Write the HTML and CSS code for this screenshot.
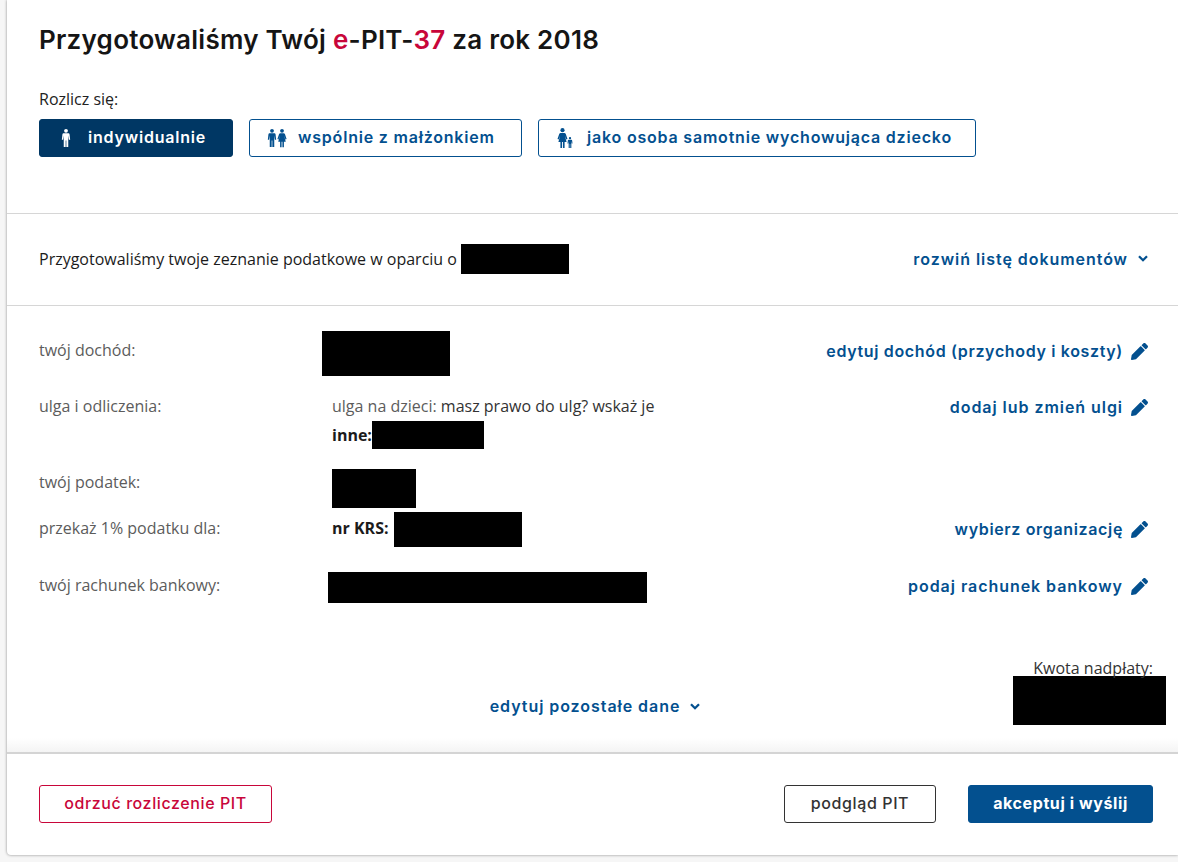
FILE: index.html
```html
<!DOCTYPE html>
<html lang="pl">
<head>
<meta charset="utf-8">
<title>e-PIT</title>
<link rel="stylesheet" href="styles.css">
</head>
<body>
<svg class="defs" width="0" height="0" aria-hidden="true">
  <symbol id="pencil" viewBox="0 0 512 512"><path d="M497.9 142.1l-46.1 46.1c-4.7 4.7-12.3 4.7-17 0l-111-111c-4.7-4.7-4.7-12.3 0-17l46.1-46.1c18.7-18.7 49.1-18.7 67.9 0l60.1 60.1c18.8 18.7 18.8 49.1 0 67.9zM284.2 99.8L21.6 362.4.4 483.9c-2.9 16.4 11.4 30.6 27.8 27.8l121.5-21.3 262.6-262.6c4.7-4.7 4.7-12.3 0-17l-111-111c-4.8-4.7-12.4-4.7-17.1 0z"/></symbol>
  <symbol id="man" viewBox="0 0 12 22"><circle cx="6" cy="2.4" r="2.3"/><path d="M3.4 5.4h5.2c1 0 1.6.6 1.7 1.5l.7 6.2h-1.500l-.8-5.200v14H6.400v-8h-.8v8H3.300v-14l-.8 5.200H1l.7-6.200c.1-.9.7-1.500 1.700-1.500z"/></symbol>
  <symbol id="woman" viewBox="0 0 12 22"><circle cx="6" cy="2.4" r="2.3"/><path d="M4 5.400h4c.8 0 1.300.4 1.600 1.100l1.900 5.700-1.300.5L8.600 8.400l1.900 7.100H8.300V22H6.500v-6.500h-1V22H3.700v-6.500H1.500l1.900-7.100-1.600 4.300-1.300-.5 1.900-5.700C2.700 5.800 3.200 5.400 4 5.400z"/></symbol>
  <symbol id="chev" viewBox="0 0 10 7"><path d="M1 1.200l4 4 4-4" fill="none" stroke="currentColor" stroke-width="2.300"/></symbol>
</svg>
<main class="card">
  <section class="head">
    <h1 class="title">Przygotowaliśmy Twój <span class="red">e</span>-PIT-<span class="red">37</span> za rok 2018</h1>
    <p class="settle">Rozlicz się:</p>
    <div class="modes">
      <button class="mode active"><svg class="ico-one"><use href="#man"/></svg>indywidualnie</button>
      <button class="mode"><span class="ico-pair"><svg><use href="#man"/></svg><svg><use href="#woman"/></svg></span>wspólnie z małżonkiem</button>
      <button class="mode"><span class="ico-kid"><svg class="big"><use href="#woman"/></svg><svg class="small"><use href="#man"/></svg></span>jako osoba samotnie wychowująca dziecko</button>
    </div>
  </section>

  <section class="docs">
    <div class="docs-text">Przygotowaliśmy twoje zeznanie podatkowe w oparciu o <span class="redact r-docs"></span></div>
    <a class="link wide">rozwiń listę dokumentów<svg class="chev"><use href="#chev"/></svg></a>
  </section>

  <section class="data">
    <div class="row r1">
      <div class="label">twój dochód:</div>
      <div class="value"><span class="redact r-income"></span></div>
      <a class="link">edytuj dochód (przychody i koszty)<svg class="pen"><use href="#pencil"/></svg></a>
    </div>
    <div class="row r2">
      <div class="label">ulga i odliczenia:</div>
      <div class="value">
        <div><span class="muted">ulga na dzieci:</span> masz prawo do ulg? wskaż je</div>
        <div class="other"><b>inne:</b><span class="redact r-other"></span></div>
      </div>
      <a class="link wide">dodaj lub zmień ulgi<svg class="pen"><use href="#pencil"/></svg></a>
    </div>
    <div class="row r3">
      <div class="label">twój podatek:</div>
      <div class="value"><span class="redact r-tax"></span></div>
    </div>
    <div class="row r4">
      <div class="label">przekaż 1% podatku dla:</div>
      <div class="value krs"><b>nr KRS:</b><span class="redact r-krs"></span></div>
      <a class="link">wybierz organizację<svg class="pen"><use href="#pencil"/></svg></a>
    </div>
    <div class="row r5">
      <div class="label">twój rachunek bankowy:</div>
      <div class="value"><span class="redact r-bank"></span></div>
      <a class="link wide">podaj rachunek bankowy<svg class="pen"><use href="#pencil"/></svg></a>
    </div>
  </section>

  <section class="summary">
    <a class="link wide more">edytuj pozostałe dane<svg class="chev"><use href="#chev"/></svg></a>
    <div class="refund">
      <div class="refund-label">Kwota nadpłaty:</div>
      <span class="redact r-refund"></span>
    </div>
  </section>

  <footer class="foot">
    <button class="btn reject">odrzuć rozliczenie PIT</button>
    <div class="foot-right">
      <button class="btn preview">podgląd PIT</button>
      <button class="btn accept">akceptuj i wyślij</button>
    </div>
  </footer>
</main>
</body>
</html>
```
FILE: styles.css
```css
* { box-sizing: border-box; }
html, body { margin: 0; height: 100%; }
body {
  background: #f6f6f6;
  font-family: "Open Sans", sans-serif;
  font-size: 16px;
  line-height: 20px;
  color: #1b1b1b;
  overflow: hidden;
}
.defs { position: absolute; }
.card {
  margin-left: 7px;
  height: 855px;
  background: #fff;
  border-radius: 0 0 0 4px;
  box-shadow: 0 0 3px rgba(0,0,0,.45);
  display: flex;
  flex-direction: column;
}
.head {
  height: 214px;
  padding: 24px 32px 0;
  border-bottom: 1px solid #d6d6d6;
}
.title {
  margin: 0;
  font-family: Inter, sans-serif;
  font-weight: 600;
  font-size: 26px;
  line-height: 32px;
  letter-spacing: .25px;
  color: #151515;
}
.red { color: #c8063a; }
.settle { margin: 32px 0 0; line-height: 22px; color: #222; }
.modes { display: flex; gap: 16px; margin-top: 9px; }
.mode {
  height: 38px;
  display: flex;
  align-items: center;
  font-family: Inter, sans-serif;
  font-size: 16px;
  font-weight: 600;
  letter-spacing: .8px;
  color: #03508f;
  background: #fff;
  border: 1px solid #03508f;
  border-radius: 3px;
  padding: 0 0 2px;
}
.mode:nth-child(1) { width: 194px; padding-left: 21px; }
.mode:nth-child(2) { width: 273px; padding-left: 17px; }
.mode:nth-child(3) { width: 438px; padding-left: 18px; }
.mode.active { background: #003764; border-color: #003764; color: #fff; }
.mode svg { fill: currentColor; display: block; }
.ico-one { width: 10px; height: 20px; margin: 2px 17px 0 0; flex: none; }
.ico-pair { display: flex; width: 20px; margin: 2px 11px 0 0; }
.ico-pair svg { width: 10px; height: 20px; }
.ico-kid { display: flex; align-items: flex-end; width: 16px; margin: 2px 14px 0 0; }
.ico-kid .big { width: 11px; height: 20px; }
.ico-kid .small { width: 6px; height: 11px; margin-left: -1px; }

.docs {
  height: 92px;
  padding: 0 30px 2px 32px;
  border-bottom: 1px solid #d6d6d6;
  display: flex;
  align-items: center;
  justify-content: space-between;
}
.docs-text { display: flex; align-items: center; }
.redact { display: block; background: #000; flex: none; }
.r-docs { width: 108px; height: 30px; margin-left: 4px; }
.link {
  display: flex;
  align-items: center;
  align-self: start;
  font-family: Inter, sans-serif;
  font-size: 16px;
  font-weight: 600;
  letter-spacing: .65px;
  color: #03508f;
  white-space: nowrap;
}
.link.wide { letter-spacing: .95px; }
.docs .link { align-self: center; }
.chev { width: 10px; height: 7px; margin-left: 10px; color: #03508f; }
.pen { width: 17px; height: 17px; margin-left: 8px; fill: #03508f; }

.data { padding: 25px 30px 0 32px; flex: none; }
.row { display: grid; grid-template-columns: 293px 1fr auto; color: #333; }
.label { color: #5c5c5c; }
.r1 { height: 65px; }
.r1 .label { margin-top: 9px; }
.r1 .link { margin-top: 10px; }
.r1 .value { margin-left: -10px; }
.r-income { width: 128px; height: 45px; }
.r2 { height: 73px; }
.r2 .link { margin-top: 1px; }
.muted { color: #5c5c5c; }
.other { display: flex; align-items: center; margin-top: 5px; }
.r-other { width: 112px; height: 28px; }
.r3 { height: 43px; }
.r3 .label { margin-top: 3px; }
.r-tax { width: 84px; height: 39px; }
.r4 { height: 60px; }
.r4 .label { margin-top: 6px; }
.r4 .link { margin-top: 7px; }
.krs { display: flex; align-items: flex-start; }
.krs b { margin-top: 6px; }
.r-krs { width: 128px; height: 35px; margin-left: 5px; }
.r5 .label { margin-top: 3px; }
.r5 .link { margin-top: 4px; }
.r5 .value { margin-left: -4px; }
.r-bank { width: 319px; height: 31px; }
b { font-weight: 700; color: #1b1b1b; }

.summary {
  flex: 1;
  position: relative;
  display: flex;
  justify-content: center;
  background: linear-gradient(to bottom, #fff calc(100% - 14px), #f4f4f4);
}
.more { margin-top: 93px; margin-left: 5px; }
.refund { position: absolute; right: 12px; top: 55px; text-align: right; }
.refund-label { padding-right: 13px; color: #333; }
.r-refund { width: 153px; height: 49px; margin-top: -2px; }

.foot {
  height: 103px;
  flex: none;
  border-top: 2px solid #d4d4d4;
  padding: 31px 25px 0 32px;
  display: flex;
  justify-content: space-between;
  align-items: flex-start;
}
.foot-right { display: flex; gap: 32px; }
.btn {
  height: 38px;
  font-family: Inter, sans-serif;
  font-size: 16px;
  font-weight: 500;
  letter-spacing: .6px;
  border-radius: 3px;
  background: #fff;
  border: 1px solid #333;
  padding: 0 0 2px;
}
.reject { width: 233px; color: #c8063a; border-color: #c8063a; }
.preview { width: 152px; color: #333; }
.accept { width: 185px; color: #fff; background: #03508f; border-color: #03508f; font-weight: 700; }
```
